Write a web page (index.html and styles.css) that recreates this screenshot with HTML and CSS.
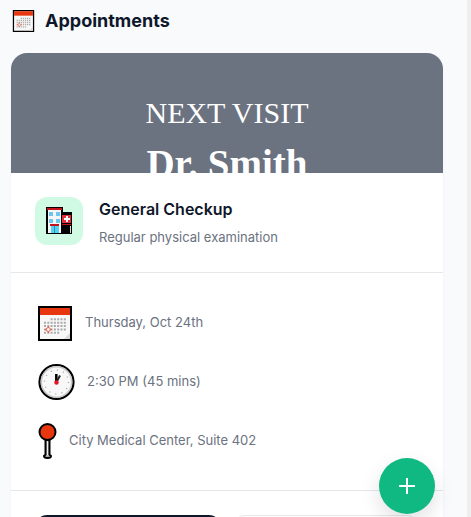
FILE: index.html
```html
<!DOCTYPE html>
<html lang="en">
<head>
  <meta charset="UTF-8" />
  <meta name="viewport" content="width=device-width, initial-scale=1.0"/>
  <title>Appointments</title>
  <link rel="stylesheet" href="styles.css">
</head>
<body>
  <!-- Calendar is used in the header and in the details list -->
  <svg class="symbols" aria-hidden="true">
    <symbol id="calendar" viewBox="0 0 34 35">
      <rect x="1" y="1" width="32" height="33" fill="#f7f7f7" stroke="#000" stroke-width="2"/>
      <rect x="2" y="2" width="30" height="7" fill="#e8360e"/>
      <path d="M32 27v6h-6z" fill="#d8d8d8"/>
      <path d="M12.600 13.300h16M6 16.700h22.600M6 20h22.600M6 23.400h22.600M6 26.700h16" stroke="#aaa" stroke-width="2" stroke-dasharray="2 1.300"/>
      <path d="M10.300 20v7M6.800 23.500h7" stroke="#f05a4a" stroke-width="1"/>
      <circle cx="10.300" cy="23.500" r="2" fill="#f7f7f7" stroke="#f05a4a" stroke-width="1"/>
    </symbol>
  </svg>

  <main class="app">
    <header class="page-header">
      <svg class="header-icon" aria-hidden="true"><use href="#calendar"/></svg>
      <h1>Appointments</h1>
    </header>

    <section class="card">
      <div class="banner">
        <p class="banner-label">NEXT VISIT</p>
        <p class="banner-name">Dr. Smith</p>
      </div>

      <div class="visit">
        <div class="visit-icon">
          <svg width="28" height="28" viewBox="0 0 28 28" aria-hidden="true">
            <path d="M1 0h17v5h9v22H1z" fill="#000"/>
            <path d="M3 3h13v23H3z" fill="#f4f6fa"/>
            <path d="M2 1h15v2H2z" fill="#c4141b"/>
            <path d="M4 5h4v4H4zM11 5h4v4h-4zM4 12h4v4H4zM11 12h4v4h-4z" fill="#6fc6ec"/>
            <path d="M5 17h9v2H5z" fill="#c4141b"/>
            <path d="M6 19h8v7H6z" fill="#55d0f0"/>
            <path d="M9 19h1v7H9z" fill="#2a8fc0"/>
            <path d="M17 8h9v8h-9z" fill="#e0303c"/>
            <path d="M17 17h9v1h-9z" fill="#c4141b"/>
            <path d="M21 9h2v2h2v2h-2v2h-2v-2h-2v-2h2z" fill="#fff"/>
            <path d="M25 19h1v7h-1z" fill="#ddd"/>
          </svg>
        </div>
        <div class="visit-text">
          <h2>General Checkup</h2>
          <p>Regular physical examination</p>
        </div>
      </div>

      <ul class="details">
        <li>
          <svg width="38" height="36" viewBox="0 0 38 36" aria-hidden="true">
            <use href="#calendar" x="3" y="1" width="34" height="35"/>
          </svg>
          <span>Thursday, Oct 24th</span>
        </li>
        <li>
          <svg width="40" height="38" viewBox="0 0 40 38" aria-hidden="true">
            <circle cx="21.500" cy="19" r="17" fill="#f8f8f8" stroke="#000" stroke-width="2.200"/>
            <circle cx="21.500" cy="19" r="15.200" fill="none" stroke="#c8c8c8" stroke-width="1.500"/>
            <circle cx="21.500" cy="19" r="12" fill="none" stroke="#aaa" stroke-width="1.200" stroke-dasharray="1.200 5.083"/>
            <path d="M21.300 19v-8" stroke="#000" stroke-width="2.500"/>
            <path d="M21.500 19l3.500-6.500" stroke="#222" stroke-width="2"/>
            <circle cx="21.500" cy="19.500" r="2.200" fill="#e81224"/>
          </svg>
          <span>2:30 PM (45 mins)</span>
        </li>
        <li>
          <svg width="22" height="38" viewBox="0 0 22 38" aria-hidden="true">
            <path d="M10.500 18v14.500l-1.500 1.500q0 2 3.500 2t3.500-2l-1.500-1.500V18z" fill="#b8b8bc" stroke="#000" stroke-width="2" stroke-linejoin="round"/>
            <path d="M12.500 19v14" stroke="#eee" stroke-width="1"/>
            <circle cx="12.500" cy="10" r="8" fill="#e8360e" stroke="#000" stroke-width="2"/>
          </svg>
          <span>City Medical Center, Suite 402</span>
        </li>
      </ul>

      <div class="actions">
        <button class="btn btn-primary" type="button" aria-label="Confirm"></button>
        <button class="btn btn-secondary" type="button" aria-label="Reschedule"></button>
      </div>
    </section>

    <button class="fab" type="button" aria-label="Add appointment">
      <svg width="16" height="16" viewBox="0 0 16 16" aria-hidden="true">
        <path d="M8 0v16M0 8h16" stroke="#fff" stroke-width="2"/>
      </svg>
    </button>
  </main>
</body>
</html>
```
FILE: styles.css
```css
* {
  box-sizing: border-box;
}
body {
  margin: 0;
  background-color: #f8fafc;
  font-family: Inter, "Liberation Sans", sans-serif;
  color: #0f172a;
}
h1, h2, p, ul {
  margin: 0;
  padding: 0;
}
.symbols {
  display: none;
}
.app {
  height: 100vh;
  overflow: hidden;
  padding: 8px 24px 0 11px;
  border-right: 4px solid #eeeeee;
}
.page-header {
  display: flex;
  align-items: center;
  gap: 10px;
  height: 25px;
  margin-bottom: 20px;
  padding-left: 1px;
}
.header-icon {
  width: 23px;
  height: 22px;
}
h1 {
  font-size: 18px;
  line-height: 24px;
  font-weight: 700;
}
.card {
  background-color: #fff;
  border-radius: 16px;
  overflow: hidden;
  box-shadow: 0 1px 3px rgba(0, 0, 0, 0.05);
}
.banner {
  height: 120px;
  padding-top: 40px;
  overflow: hidden;
  background-color: #6b7280;
  color: #fff;
  font-family: "Liberation Serif", serif;
  text-align: center;
}
.banner-label {
  font-size: 30px;
  line-height: 40px;
}
.banner-name {
  margin-top: 8px;
  font-size: 39px;
  line-height: 46px;
  font-weight: bold;
}
.visit {
  display: flex;
  align-items: flex-start;
  gap: 16px;
  padding: 24px;
  border-bottom: 1px solid #e5e7eb;
}
.visit-icon {
  display: flex;
  align-items: center;
  justify-content: center;
  width: 48px;
  height: 48px;
  border-radius: 12px;
  background-color: #d1fae5;
}
h2 {
  margin-bottom: 5px;
  font-size: 16px;
  line-height: 24px;
  font-weight: 600;
}
.visit-text p,
.details {
  font-size: 13px;
  line-height: 22px;
  color: #6b7280;
}
.details {
  display: flex;
  flex-direction: column;
  gap: 16px;
  padding: 28px 24px;
  list-style-type: none;
  border-bottom: 1px solid #e5e7eb;
}
.details li {
  display: flex;
  align-items: center;
  gap: 12px;
  height: 43px;
}
.details span {
  padding-bottom: 2px;
}
.actions {
  display: grid;
  grid-template-columns: 1fr 1fr;
  gap: 12px;
  padding: 24px;
}
.btn {
  height: 44px;
  border: none;
  border-radius: 12px;
  cursor: pointer;
}
.btn-primary {
  background-color: #0f172a;
}
.btn-secondary {
  background-color: #fff;
  border: 1px solid #e5e7eb;
}
.fab {
  position: fixed;
  right: 36px;
  bottom: 3px;
  display: flex;
  align-items: center;
  justify-content: center;
  width: 56px;
  height: 56px;
  padding: 0;
  border: none;
  border-radius: 50%;
  background-color: #10b981;
  box-shadow: 0 8px 20px rgba(0, 0, 0, 0.12);
  cursor: pointer;
}
```
